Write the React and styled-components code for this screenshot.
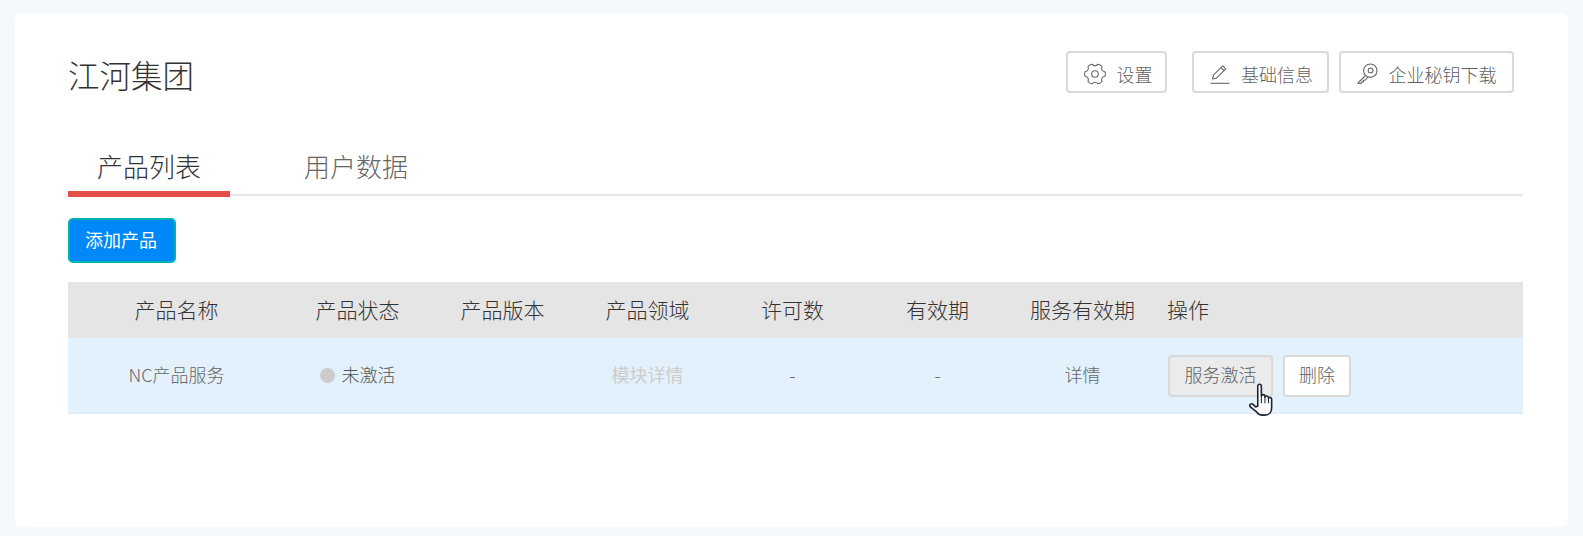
import React from 'react';
import styled, { createGlobalStyle } from 'styled-components';

const GlobalStyle = createGlobalStyle`
  html, body {
    margin: 0;
    padding: 0;
    background: #f5f9fc;
    font-family: "Noto Sans CJK SC", "Liberation Sans", sans-serif;
  }
`
const StPage = styled.div`
  height: 536px;
  padding: 13px 15px 9px 15px;
  box-sizing: border-box;
  overflow: hidden;
`
const StCard = styled.div`
  height: 100%;
  background: #fff;
  border-radius: 6px;
  padding: 38px 45px 0 53px;
  box-sizing: border-box;
`
const StHead = styled.div`
  display: flex;
  align-items: center;
  justify-content: space-between;
  height: 42px;
  padding-right: 9px;
`
const StTitle = styled.h1`
  margin: 0;
  padding-top: 3px;
  font-size: 31.5px;
  font-weight: 300;
  color: #333;
`
const StActions = styled.div`
  display: flex;
  align-self: flex-start;
  gap: 10px;
`
const StBtn = styled.button`
  display: inline-flex;
  align-items: center;
  justify-content: center;
  gap: ${(p) => p.$gap || 0}px;
  height: 42px;
  width: ${(p) => p.$w}px;
  margin-right: ${(p) => p.$mr || 0}px;
  padding: ${(p) => p.$pt || 0}px 0 ${(p) => p.$pb || 0}px ${(p) => p.$pl || 0}px;
  border: 2px solid #d9d9d9;
  border-radius: 4px;
  background: ${(p) => p.$bg || '#fff'};
  color: #5f5f5f;
  font-family: inherit;
  font-size: 18px;
  font-weight: 300;
`
const StTabs = styled.div`
  display: flex;
  margin-top: 51px;
  height: 50px;
  border-bottom: 2px solid #e5e5e5;
`
const StTab = styled.div`
  width: ${(p) => p.$w}px;
  height: 53px;
  box-sizing: border-box;
  text-align: center;
  line-height: 44px;
  font-size: 26px;
  font-weight: 300;
  color: ${(p) => (p.$on ? '#333' : '#666')};
  border-bottom: ${(p) => (p.$on ? '6px solid #e34d4a' : '0')};
`
const StAdd = styled.button`
  display: block;
  width: 108px;
  height: 45px;
  margin-top: 22px;
  padding: 0 2px 4px 0;
  border: 2px solid #00b3b3;
  border-radius: 5px;
  background: #0088f9;
  color: #fff;
  font-family: inherit;
  font-size: 18px;
`
const StGrid = styled.div`
  display: grid;
  grid-template-columns: 217px repeat(6, 145px) 1fr;
  align-items: center;
  height: ${(p) => p.$h}px;
  background: ${(p) => p.$bg};
  border-bottom: ${(p) => (p.$line ? '1px solid #e3e9ee' : '0')};
  box-sizing: border-box;
`
const StHeaderRow = styled(StGrid)`
  margin-top: 19px;
`
const StTh = styled.div`
  text-align: ${(p) => (p.$left ? 'left' : 'center')};
  padding-left: ${(p) => (p.$left ? 12 : 0)}px;
  padding-bottom: 2px;
  font-size: 21px;
  font-weight: 300;
  color: #333;
`
const StTd = styled.div`
  display: flex;
  align-items: center;
  justify-content: center;
  padding-bottom: 3px;
  font-size: 18px;
  font-weight: ${(p) => p.$weight || 300};
  color: ${(p) => p.$color || '#666'};
`
const StOps = styled.div`
  position: relative;
  display: flex;
  gap: 10px;
  padding-left: 13px;
`
const StDot = styled.span`
  width: 15px;
  height: 15px;
  margin: 3px 7px 0 0;
  border-radius: 50%;
  background: #ccc;
`
const StCursor = styled.svg`
  position: absolute;
  left: 93px;
  top: 28px;
`

// six rounded lobes around the centre
const gearPath = () => {
  const pt = (deg, r) => {
    const a = (deg * Math.PI) / 180
    return `${(11 + r * Math.cos(a)).toFixed(2)} ${(11 + r * Math.sin(a)).toFixed(2)}`
  }
  let d = `M${pt(-13, 10.2)}`
  for (let i = 0; i < 6; i++) {
    const c = i * 60
    d += ` Q${pt(c, 10.9)} ${pt(c + 13, 10.2)} Q${pt(c + 30, 6.6)} ${pt(c + 47, 10.2)}`
  }
  return d + 'Z'
}

const GearIcon = () => (
  <svg width="22" height="22" viewBox="0 0 22 22" fill="none" stroke="#666" strokeWidth="1.1">
    <path d={gearPath()} strokeLinejoin="round" />
    <circle cx="11" cy="11" r="3.3" />
  </svg>
)
const PencilIcon = () => (
  <svg width="20" height="20" viewBox="0 0 20 20" fill="none" stroke="#666" strokeWidth="1.1">
    <path d="M2.5 15l.9-3.8L12.8 1.8l3 3L6.4 14.2z" strokeLinejoin="round" />
    <path d="M11 3.6l3 3" />
    <path d="M.5 19.3h19" />
  </svg>
)
const KeyIcon = () => (
  <svg width="21" height="21" viewBox="0 0 21 21" fill="none" stroke="#666" strokeWidth="1.1">
    <circle cx="13.3" cy="7.7" r="6.7" />
    <circle cx="13.6" cy="7.4" r="2.4" />
    <path d="M8.5 12.5L1 20v.5h3l.8-1.6h1.6v-1.7h1.7l3-3" strokeLinejoin="round" />
  </svg>
)
const HandCursor = () => (
  <StCursor width="28" height="35" viewBox="0 0 26 33">
    <path
      d="M9 3c0-2.400 3.400-2.400 3.400 0v9.500c.3-2 3.200-2 3.400 0v1c.4-1.800 3.100-1.700 3.300.2v1c.5-1.600 3-1.300 3 .6v8c0 4-2.200 7-6.400 7h-2.200c-2.600 0-4-1-5.300-2.800L2 22.500c-1.500-2 .8-3.800 2.600-2.300L7 22.500l2-.5z"
      fill="#fff"
      stroke="#1c2433"
      strokeWidth="1.5"
      strokeLinejoin="round"
    />
    <path d="M12.4 13v6M15.8 13.500V19M19.1 15V19" stroke="#1c2433" strokeWidth="1" fill="none" />
  </StCursor>
)

const columns = ['产品名称', '产品状态', '产品版本', '产品领域', '许可数', '有效期', '服务有效期']

function App() {
  return (
    <StPage>
      <GlobalStyle />
      <StCard>
        <StHead>
          <StTitle>江河集团</StTitle>
          <StActions>
            <StBtn $w={101} $gap={11} $mr={15} $pt={3} $pl={3}><GearIcon />设置</StBtn>
            <StBtn $w={137} $gap={11} $pt={3} $pl={2}><PencilIcon />基础信息</StBtn>
            <StBtn $w={175} $gap={11} $pt={3}><KeyIcon />企业秘钥下载</StBtn>
          </StActions>
        </StHead>
        <StTabs>
          <StTab $w={162} $on>产品列表</StTab>
          <StTab $w={252}>用户数据</StTab>
        </StTabs>
        <StAdd>添加产品</StAdd>
        <StHeaderRow $h={56} $bg="#e5e5e5">
          {columns.map((c) => <StTh key={c}>{c}</StTh>)}
          <StTh $left>操作</StTh>
        </StHeaderRow>
        <StGrid $h={76} $bg="#e2f1fc" $line>
          <StTd>NC产品服务</StTd>
          <StTd $color="#555"><StDot />未激活</StTd>
          <StTd />
          <StTd $color="#ccc" $weight={400}>模块详情</StTd>
          <StTd>-</StTd>
          <StTd>-</StTd>
          <StTd>详情</StTd>
          <StOps>
            <StBtn $w={105} $bg="#ebebeb" $pb={3}>服务激活</StBtn>
            <StBtn $w={68} $pb={3}>删除</StBtn>
            <HandCursor />
          </StOps>
        </StGrid>
      </StCard>
    </StPage>
  );
}

export default App;
